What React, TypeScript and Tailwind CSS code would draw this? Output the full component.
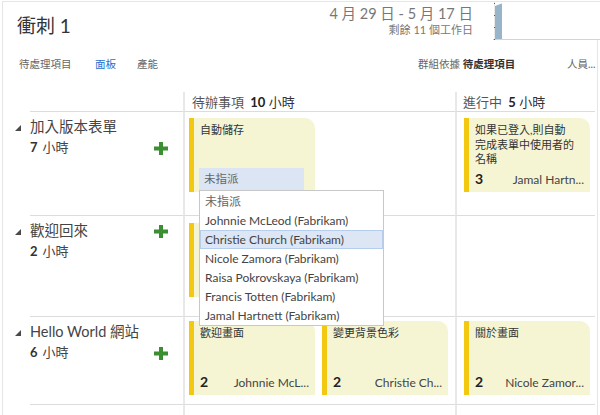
import React from "react";

const font = "font-['Lato','Noto_Sans_CJK_TC',sans-serif]";

const people = [
  "未指派",
  "Johnnie McLeod (Fabrikam)",
  "Christie Church (Fabrikam)",
  "Nicole Zamora (Fabrikam)",
  "Raisa Pokrovskaya (Fabrikam)",
  "Francis Totten (Fabrikam)",
  "Jamal Hartnett (Fabrikam)",
];

const Plus = () => (
  <svg width="14" height="13" viewBox="0 0 14 13" className="shrink-0">
    <rect x="5" y="0" width="4" height="13" fill="#3b8e31" />
    <rect x="0" y="4.5" width="14" height="4" fill="#3b8e31" />
  </svg>
);

const Tri = () => (
  <svg width="6" height="6" viewBox="0 0 6 6">
    <polygon points="6,0 6,6 0,6" fill="#4a4a4a" />
  </svg>
);

const Card = ({
  title,
  num,
  who,
  children,
}: {
  title?: string;
  num?: string;
  who?: string;
  children?: React.ReactNode;
}) => (
  <div className="flex w-[126px] h-[74px] shrink-0">
    <div className="w-[5px] bg-[#f2c811]" />
    <div className="flex-1 bg-[#f6f5d3] rounded-tr-[10px] flex flex-col pl-[6px] pr-[6px] pt-[5px] pb-[3px]">
      {title && (
        <div className="w-[100px] text-[11px] leading-[14.5px] text-[#333]">
          {title}
        </div>
      )}
      <div className="flex-1" />
      {children}
      {num && (
        <div className="flex items-baseline justify-between">
          <span className="text-[14px] leading-[16px] font-bold text-[#222]">
            {num}
          </span>
          <span className="text-[12px] text-[#444]">{who}</span>
        </div>
      )}
    </div>
  </div>
);

const Assign = () => (
  <div className="relative ml-[-1px] mb-[-1px] w-[105px] h-[22px] bg-[#dce5f3] flex items-center pl-[5px] text-[11.5px] text-[#666]">
    未指派
    <div className="absolute left-0 top-full w-[185px] bg-white border border-[#c8c8c8] pt-px z-10">
      {people.map((p, i) => (
        <div
          key={p}
          className={
            "h-[19px] flex items-center pl-[4px] text-[12px] border " +
            (i == 2
              ? "bg-[#dce6f5] border-[#b6cdeb] text-[#444]"
              : i == 0
              ? "border-transparent text-[#666]"
              : "border-transparent text-[#444]")
          }
        >
          {p}
        </div>
      ))}
    </div>
  </div>
);

const Row = ({
  label,
  hours,
  h,
  pt,
  plusTop,
  todo,
  doing,
}: {
  label: string;
  hours: string;
  h: string;
  pt: string;
  plusTop?: boolean;
  todo: React.ReactNode;
  doing: React.ReactNode;
}) => (
  <div className={"flex " + h}>
    <div className="w-[180px] shrink-0 flex">
      <div className="w-[27px] shrink-0 pl-[12px] pt-[13px]">
        <Tri />
      </div>
      <div className="flex-1 border-b border-[#dcdcdc] pt-[6px] pr-[15px]">
        <div className="flex items-center justify-between h-[18px]">
          <span className="text-[14.5px] text-[#444]">{label}</span>
          {plusTop && <Plus />}
        </div>
        <div className="flex items-center justify-between h-[18px] mt-[3px]">
          <span className="text-[13px] text-[#444]">
            <b className="text-[#333] mr-[5px]">{hours}</b>小時
          </span>
          {!plusTop && <Plus />}
        </div>
      </div>
    </div>
    <div className={"w-[272px] shrink-0 border-l-2 border-l-[#e8e8e8] border-b border-b-[#dcdcdc] flex gap-[7px] pl-[4px] " + pt}>
      {todo}
    </div>
    <div className={"w-[140px] shrink-0 border-l-2 border-l-[#e8e8e8] border-b border-b-[#dcdcdc] pl-[7px] " + pt}>
      {doing}
    </div>
  </div>
);

export default function App() {
  return (
    <div className={"w-[600px] h-[415px] bg-white overflow-hidden " + font}>
      <div className="ml-[2px] mt-px h-[414px] border-l border-t border-[#e6e6e6]">
        {/* title row */}
        <div className="flex h-[38px]">
          <div className="pl-[14px] pt-[10px] text-[19px] leading-[28px] text-[#333]">
            衝刺 1
          </div>
          <div className="ml-auto mr-[20px] pt-[3px] text-right">
            <div className="text-[14.5px] leading-[18px] text-[#777]">
              4 月 29 日 - 5 月 17 日
            </div>
            <div className="text-[11px] leading-[14px] text-[#777]">
              剩餘 11 個工作日
            </div>
          </div>
          <div className="w-[107px] h-[38px] shrink-0">
            <svg width="107" height="38" viewBox="0 0 107 38">
              <line x1="0" y1="37.5" x2="107" y2="37.5" stroke="#d4d4d4" />
              <line x1="1.5" y1="0" x2="1.5" y2="38" stroke="#eaeaea" />
              <rect x="1" y="1" width="1" height="1" fill="#555" />
              <rect x="1" y="13" width="1" height="1" fill="#555" />
              <rect x="1" y="25" width="1" height="1" fill="#555" />
              <rect x="1" y="37" width="1" height="1" fill="#555" />
              <polygon
                points="2,4 4,3.3 6,2.6 8,1.8 9,1.5 9,37 2,37"
                fill="#97b4c9"
              />
            </svg>
          </div>
        </div>

        <div className="w-[595px] border-r border-[#e6e6e6]">
          {/* tabs row */}
          <div className="flex h-[52px] pl-[16px] pt-[17px] text-[10.5px] leading-[14px] text-[#666]">
            <span className="w-[76px] shrink-0">待處理項目</span>
            <span className="w-[42px] shrink-0 text-[#1f6fd0]">面板</span>
            <span className="w-[281px] shrink-0">產能</span>
            <span className="w-[149px] shrink-0">
              群組依據 <b className="text-[#333]">待處理項目</b>
            </span>
            <span>人員...</span>
          </div>

          {/* board header */}
          <div className="flex h-[20px]">
            <div className="w-[180px] shrink-0 flex">
              <div className="w-[27px] shrink-0" />
              <div className="flex-1 border-b border-[#dcdcdc]" />
            </div>
            <div className="w-[272px] shrink-0 border-l-2 border-l-[#e8e8e8] border-b border-b-[#dcdcdc] pl-[7px] pt-[1px] text-[13px] leading-[18px] text-[#555]">
              待辦事項 <b className="ml-[3px] text-[#222]">10</b>{" "}
              <span className="text-[#333]">小時</span>
            </div>
            <div className="w-[140px] shrink-0 border-l-2 border-l-[#e8e8e8] border-b border-b-[#dcdcdc] pl-[6px] pt-[1px] text-[13px] leading-[18px] text-[#555]">
              進行中 <b className="ml-[3px] text-[#222]">5</b>{" "}
              <span className="text-[#333]">小時</span>
            </div>
          </div>

          <Row
            label="加入版本表單"
            hours="7"
            h="h-[104px]"
            pt="pt-[6px]"
            todo={
              <Card title="自動儲存">
                <Assign />
              </Card>
            }
            doing={
              <Card
                title="如果已登入,則自動完成表單中使用者的名稱"
                num="3"
                who="Jamal Hartn..."
              />
            }
          />
          <Row
            label="歡迎回來"
            hours="2"
            h="h-[101px]"
            pt="pt-[7px]"
            plusTop
            todo={<Card />}
            doing={null}
          />
          <Row
            label="Hello World 網站"
            hours="6"
            h="h-[88px]"
            pt="pt-[4px]"
            todo={
              <>
                <Card title="歡迎畫面" num="2" who="Johnnie McL..." />
                <Card title="變更背景色彩" num="2" who="Christie Ch..." />
              </>
            }
            doing={<Card title="關於畫面" num="2" who="Nicole Zamor..." />}
          />
          <div className="flex h-[12px]">
            <div className="w-[180px] shrink-0" />
            <div className="w-[272px] shrink-0 border-l-2 border-[#e8e8e8]" />
            <div className="w-[140px] shrink-0 border-l-2 border-[#e8e8e8]" />
          </div>
        </div>
      </div>
    </div>
  );
}
